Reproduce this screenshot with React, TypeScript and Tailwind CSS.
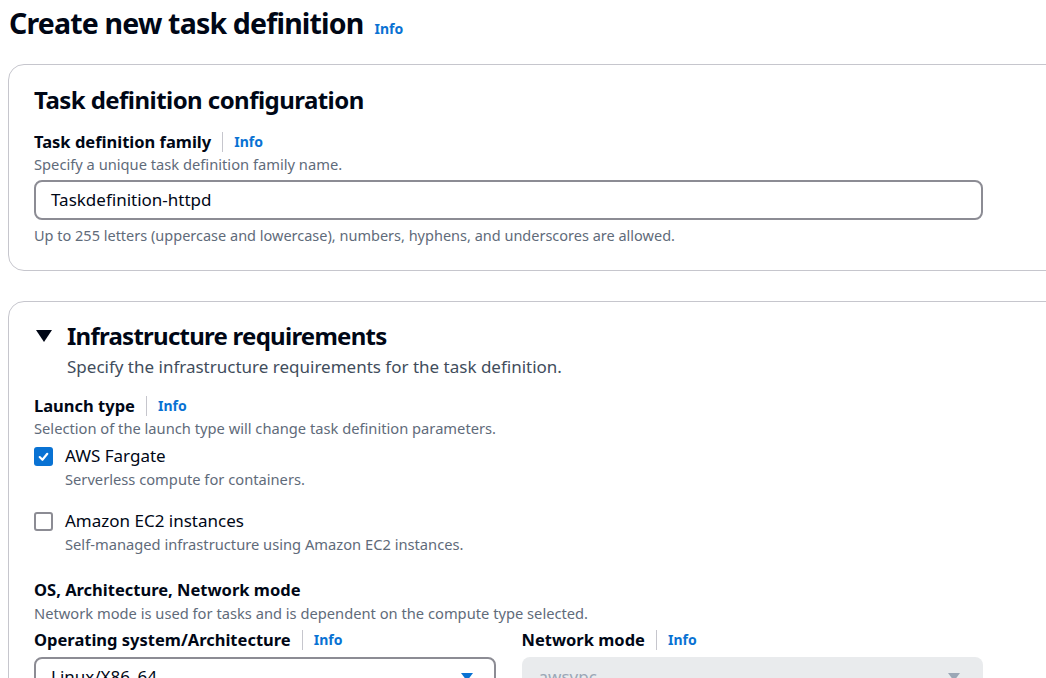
import React from 'react';

const Info: React.FC<{ sep?: boolean }> = ({ sep = true }) => (
  <>
    {sep && <span className="mx-[11px] h-[20px] w-px bg-[#c6c6cd]"></span>}
    <span className="text-[14px] font-bold text-[#0972d3]">Info</span>
  </>
);

const Label: React.FC<{ text: string }> = ({ text }) => (
  <div className="flex h-[22px] items-center text-[16.5px] font-bold leading-[22px] text-[#000716]">
    {text}
    <Info />
  </div>
);

const Checkbox: React.FC<{ checked?: boolean; label: string; desc: string }> = ({ checked, label, desc }) => (
  <div className="flex gap-[12px]">
    <div
      className={`mt-[2px] flex h-[19px] w-[19px] shrink-0 items-center justify-center rounded-[3px] ${
        checked ? 'bg-[#0972d3]' : 'border-2 border-[#8c8c94] bg-white'
      }`}
    >
      {checked && (
        <svg className="h-[13px] w-[13px]" viewBox="0 0 12 12" fill="none" stroke="white" strokeWidth="2" strokeLinecap="round" strokeLinejoin="round">
          <path d="M2.5 6.5l2.5 2.5 4.5-5.5" />
        </svg>
      )}
    </div>
    <div>
      <div className="text-[17px] leading-[22px] text-[#000716]">{label}</div>
      <div className="mt-[1px] text-[14.7px] leading-[22px] text-[#5f6b7a]">{desc}</div>
    </div>
  </div>
);

const Caret: React.FC<{ color: string }> = ({ color }) => (
  <svg className="h-[10px] w-[14px]" viewBox="0 0 14 10">
    <path d="M1 1h12L7 9z" fill={color} />
  </svg>
);

export default function App() {
  return (
    <div className="h-[678px] w-[1046px] overflow-hidden bg-white font-['Noto_Sans',sans-serif] text-[#000716]">
      <div className="flex items-baseline gap-[11px] pl-[9px] pt-[3px]">
        <h1 className="text-[28.5px] font-bold leading-[40px] tracking-[-0.82px]">Create new task definition</h1>
        <span className="text-[14px] font-bold text-[#0972d3]">Info</span>
      </div>

      <div className="ml-[8px] mt-[21px] w-[1080px] rounded-[16px] border border-[#c6c6cd] px-[25px] pb-[24px] pt-[19px]">
        <h2 className="text-[24px] font-bold leading-[32px] tracking-[-0.55px]">Task definition configuration</h2>
        <div className="mt-[15px]">
          <Label text="Task definition family" />
          <div className="text-[14.7px] leading-[22px] text-[#5f6b7a]">Specify a unique task definition family name.</div>
          <div className="mt-[5px] flex h-[40px] w-[949px] items-center rounded-[8px] border-2 border-[#8c8c94] px-[15px] text-[17px]">
            Taskdefinition-httpd
          </div>
          <div className="mt-[4px] text-[14.5px] leading-[22px] text-[#5f6b7a]">
            Up to 255 letters (uppercase and lowercase), numbers, hyphens, and underscores are allowed.
          </div>
        </div>
      </div>

      <div className="ml-[8px] mt-[30px] w-[1080px] rounded-[16px] border border-[#c6c6cd] px-[25px] pt-[18px]">
        <div className="flex items-center gap-[15px] pl-[2px]">
          <svg className="h-[12px] w-[16px]" viewBox="0 0 16 12">
            <path d="M0 0h16L8 12z" fill="#000716" />
          </svg>
          <h2 className="text-[24px] font-bold leading-[32px] tracking-[-0.75px]">Infrastructure requirements</h2>
        </div>
        <div className="mt-[3px] pl-[33px] text-[17px] leading-[24px] text-[#414d5c]">
          Specify the infrastructure requirements for the task definition.
        </div>

        <div className="mt-[16px]">
          <Label text="Launch type" />
          <div className="text-[14.7px] leading-[22px] text-[#5f6b7a]">Selection of the launch type will change task definition parameters.</div>
          <div className="mt-[6px] flex flex-col gap-[20px]">
            <Checkbox checked label="AWS Fargate" desc="Serverless compute for containers." />
            <Checkbox label="Amazon EC2 instances" desc="Self-managed infrastructure using Amazon EC2 instances." />
          </div>
        </div>

        <div className="mt-[24px]">
          <div className="text-[16.5px] font-bold leading-[22px]">OS, Architecture, Network mode</div>
          <div className="mt-[1px] text-[14.7px] leading-[22px] text-[#5f6b7a]">Network mode is used for tasks and is dependent on the compute type selected.</div>
          <div className="mt-[5px] grid w-[949px] grid-cols-2 gap-[26px]">
            <div>
              <Label text="Operating system/Architecture" />
              <div className="mt-[6px] flex h-[40px] items-center justify-between rounded-[8px] border-2 border-[#8c8c94] pl-[15px] pr-[20px] text-[17px]">
                <span>Linux/X86_64</span>
                <Caret color="#0972d3" />
              </div>
            </div>
            <div>
              <Label text="Network mode" />
              <div className="mt-[6px] flex h-[40px] items-center justify-between rounded-[8px] bg-[#e9ebed] pl-[17px] pr-[22px] text-[17px] text-[#9ba7b6]">
                <span>awsvpc</span>
                <Caret color="#9ba7b6" />
              </div>
            </div>
          </div>
        </div>
      </div>
    </div>
  );
}
